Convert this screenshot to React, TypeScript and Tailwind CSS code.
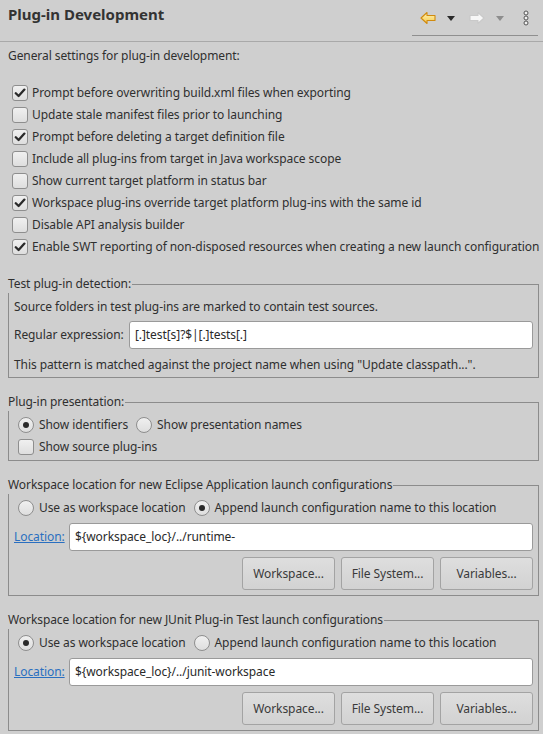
import React from "react";

const TEXT = "text-[#2f2f2f]";

function Check({ checked }: { checked: boolean }) {
  return (
    <span className="inline-flex items-center justify-center w-[16px] h-[16px] rounded-[3px] border border-[#8e8e8e] bg-gradient-to-b from-[#f0f0f0] to-[#dedede] shrink-0">
      {checked && (
        <svg width="12" height="12" viewBox="0 0 12 12">
          <path d="M1.8 6.2 L4.6 9 L10.4 2.6" fill="none" stroke="#2a2a2a" strokeWidth="2.3" strokeLinecap="round" strokeLinejoin="round" />
        </svg>
      )}
    </span>
  );
}

function Radio({ checked }: { checked: boolean }) {
  return (
    <span className="inline-flex items-center justify-center w-[16px] h-[16px] rounded-full border border-[#8e8e8e] bg-gradient-to-b from-[#f0f0f0] to-[#dedede] shrink-0">
      {checked && <span className="w-[6px] h-[6px] rounded-full bg-[#2a2a2a]" />}
    </span>
  );
}

function CheckRow({ checked, label }: { checked: boolean; label: string }) {
  return (
    <div className="flex items-center h-[22px] gap-[4px] whitespace-nowrap">
      <Check checked={checked} />
      <span>{label}</span>
    </div>
  );
}

function RadioItem({ checked, label }: { checked: boolean; label: string }) {
  return (
    <div className="flex items-center gap-[5px] whitespace-nowrap">
      <Radio checked={checked} />
      <span>{label}</span>
    </div>
  );
}

function Btn({ label }: { label: string }) {
  return (
    <div className="w-[93px] h-[33px] flex items-center justify-center rounded-[3px] border border-[#a3a3a3] bg-gradient-to-b from-[#dedede] to-[#d2d2d2] text-[#3a3a3a]">
      {label}
    </div>
  );
}

function Input({ value, className }: { value: string; className?: string }) {
  return (
    <div className={"h-[28px] flex items-center px-[5px] bg-white border border-[#9a9a9a] rounded-[3px] text-[#2a2a2a] whitespace-nowrap " + (className ?? "")}>
      {value}
    </div>
  );
}

function Group({ legend, className, children }: { legend: string; className?: string; children: React.ReactNode }) {
  return (
    <fieldset className={"border border-[#8c8c8c] " + (className ?? "")}>
      <legend className="leading-[18px] pr-[1px] -ml-[1px]">{legend}</legend>
      {children}
    </fieldset>
  );
}

function LocationGroup({ legend, useWs, className }: { legend: string; useWs: boolean; className: string }) {
  return (
    <Group legend={legend} className={className}>
      <div className="pl-[9px] pr-[5px] pt-[3px] pb-[5px]">
        <div className="flex items-center h-[22px]">
          <RadioItem checked={useWs} label="Use as workspace location" />
          <div className="ml-[8px]">
            <RadioItem checked={!useWs} label="Append launch configuration name to this location" />
          </div>
        </div>
        <div className="flex items-center mt-[4px] -ml-[4px]">
          <span className="text-[#2a6fc0] underline w-[55px] shrink-0">Location:</span>
          <Input value={useWs ? "${workspace_loc}/../junit-workspace" : "${workspace_loc}/../runtime-"} className="flex-1" />
        </div>
        <div className="flex justify-end gap-[6px] mt-[6px]">
          <Btn label="Workspace..." />
          <Btn label="File System..." />
          <Btn label="Variables..." />
        </div>
      </div>
    </Group>
  );
}

export default function App() {
  return (
    <div
      className={"w-[543px] h-[734px] overflow-hidden bg-[#cfcfcf] text-[12px] leading-[18px] tracking-[-0.08px] " + TEXT}
      style={{ fontFamily: '"Noto Sans", "DejaVu Sans", sans-serif' }}
    >
      {/* header */}
      <div className="h-[42px] border-b border-[#a9a9a9] flex justify-between items-start">
        <div className="pl-[8px] pt-[4px] text-[15px] leading-[20px] font-bold tracking-normal text-[#333]">Plug-in Development</div>
        <div className="mr-[5px] w-[126px] h-[36px] border-b border-[#8f8f8f] flex items-center pl-[8px]">
          <svg width="16" height="14" viewBox="0 0 16 14" className="mt-[1px]">
            <defs>
              <linearGradient id="yl" x1="0" y1="0" x2="0" y2="1">
                <stop offset="0" stopColor="#fff4b8" />
                <stop offset="1" stopColor="#f6c94a" />
              </linearGradient>
            </defs>
            <path d="M1 7 L7 1.5 L7 4.5 L15 4.5 L15 9.5 L7 9.5 L7 12.5 Z" fill="url(#yl)" stroke="#d08a0e" strokeWidth="1.1" strokeLinejoin="round" />
          </svg>
          <svg width="8" height="5" viewBox="0 0 8 5" className="ml-[11px] mt-[1px]">
            <path d="M0 0 L8 0 L4 5 Z" fill="#2a2a2a" />
          </svg>
          <svg width="16" height="14" viewBox="0 0 16 14" className="ml-[14px] mt-[1px]">
            <path d="M15 7 L9 1.5 L9 4.5 L1 4.5 L1 9.5 L9 9.5 L9 12.5 Z" fill="#f7f7f7" stroke="#c9c9c9" strokeWidth="1.1" strokeLinejoin="round" />
          </svg>
          <svg width="8" height="5" viewBox="0 0 8 5" className="ml-[11px] mt-[1px]">
            <path d="M0 0 L8 0 L4 5 Z" fill="#8d8d8d" />
          </svg>
          <svg width="6" height="16" viewBox="0 0 6 16" className="ml-[19px] mt-[1px]">
            <circle cx="3" cy="3" r="2" fill="#f2f2f2" stroke="#555" strokeWidth="1" />
            <circle cx="3" cy="8" r="2" fill="#f2f2f2" stroke="#555" strokeWidth="1" />
            <circle cx="3" cy="13" r="2" fill="#f2f2f2" stroke="#555" strokeWidth="1" />
          </svg>
        </div>
      </div>

      <div className="pl-[8px] pr-[4px]">
        <div className="mt-[5px]">General settings for plug-in development:</div>
        <div className="mt-[17px] pl-[4px]">
          <CheckRow checked label="Prompt before overwriting build.xml files when exporting" />
          <CheckRow checked={false} label="Update stale manifest files prior to launching" />
          <CheckRow checked label="Prompt before deleting a target definition file" />
          <CheckRow checked={false} label="Include all plug-ins from target in Java workspace scope" />
          <CheckRow checked={false} label="Show current target platform in status bar" />
          <CheckRow checked label="Workspace plug-ins override target platform plug-ins with the same id" />
          <CheckRow checked={false} label="Disable API analysis builder" />
          <CheckRow checked label="Enable SWT reporting of non-disposed resources when creating a new launch configuration" />
        </div>

        <Group legend="Test plug-in detection:" className="mt-[17px]">
          <div className="pl-[5px] pr-[5px] pt-[5px] pb-[3px]">
            <div>Source folders in test plug-ins are marked to contain test sources.</div>
            <div className="flex items-center mt-[5px]">
              <span className="w-[115px] shrink-0 whitespace-nowrap">Regular expression:</span>
              <Input value="[.]test[s]?$|[.]tests[.]" className="flex-1" />
            </div>
            <div className="mt-[7px]">This pattern is matched against the project name when using "Update classpath...".</div>
          </div>
        </Group>

        <Group legend="Plug-in presentation:" className="mt-[15px]">
          <div className="pl-[9px] pt-[3px] pb-[2px]">
            <div className="flex items-center h-[22px]">
              <RadioItem checked label="Show identifiers" />
              <div className="ml-[8px]">
                <RadioItem checked={false} label="Show presentation names" />
              </div>
            </div>
            <div className="flex items-center h-[22px] gap-[5px]">
              <Check checked={false} />
              <span>Show source plug-ins</span>
            </div>
          </div>
        </Group>

        <LocationGroup legend="Workspace location for new Eclipse Application launch configurations" useWs={false} className="mt-[15px]" />
        <LocationGroup legend="Workspace location for new JUnit Plug-in Test launch configurations" useWs className="mt-[15px]" />
      </div>
    </div>
  );
}
